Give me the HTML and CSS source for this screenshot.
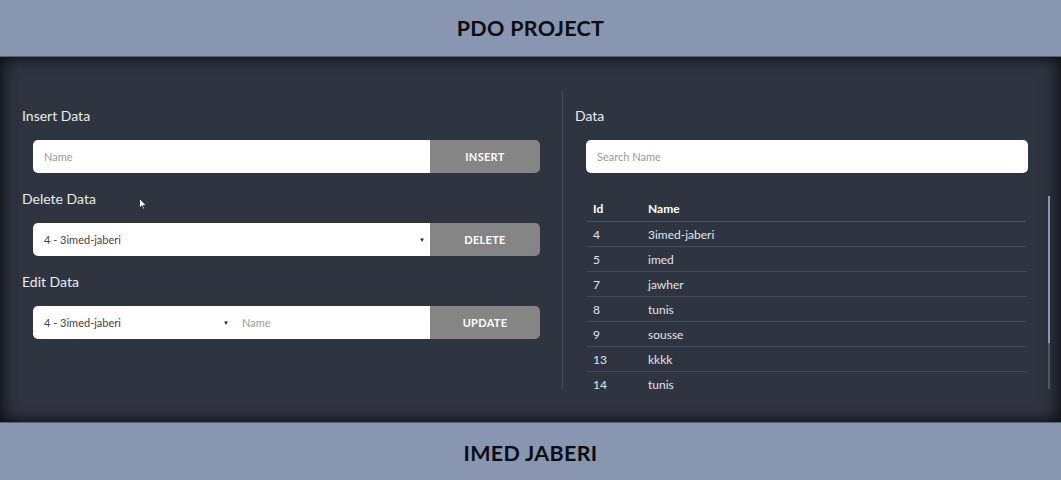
FILE: index.html
```html
<!DOCTYPE html>
<html lang="en">
<head>
<meta charset="utf-8">
<title>PDO PROJECT</title>
<link rel="stylesheet" href="styles.css">
</head>
<body>
<header class="bar bar-top">PDO PROJECT</header>
<main class="main">
  <section class="col col-left">
    <h2 class="title">Insert Data</h2>
    <div class="row">
      <input class="field" type="text" placeholder="Name">
      <button class="btn">INSERT</button>
    </div>
    <h2 class="title">Delete Data</h2>
    <div class="row">
      <div class="select select-wide"><span>4 - 3imed-jaberi</span><span class="caret">▼</span></div>
      <button class="btn">DELETE</button>
    </div>
    <h2 class="title">Edit Data</h2>
    <div class="row">
      <div class="select select-half"><span>4 - 3imed-jaberi</span><span class="caret">▼</span></div>
      <input class="field field-name" type="text" placeholder="Name">
      <button class="btn">UPDATE</button>
    </div>
  </section>
  <section class="col col-right">
    <h2 class="title">Data</h2>
    <input class="search" type="text" placeholder="Search Name">
    <div class="table-box">
      <div class="table-scroll">
        <table class="table">
          <thead>
            <tr><th class="c-id">Id</th><th>Name</th></tr>
          </thead>
          <tbody>
            <tr><td class="c-id">4</td><td>3imed-jaberi</td></tr>
            <tr><td class="c-id">5</td><td>imed</td></tr>
            <tr><td class="c-id">7</td><td>jawher</td></tr>
            <tr><td class="c-id">8</td><td>tunis</td></tr>
            <tr><td class="c-id">9</td><td>sousse</td></tr>
            <tr><td class="c-id">13</td><td>kkkk</td></tr>
            <tr class="last"><td class="c-id">14</td><td>tunis</td></tr>
          </tbody>
        </table>
      </div>
      <div class="thumb"></div>
    </div>
  </section>
</main>
<footer class="bar bar-bottom">IMED JABERI</footer>
<svg class="cursor" width="8" height="12" viewBox="0 0 8 12"><path d="M0.5 0.5 L0.5 10 L2.8 7.8 L4.4 11.3 L5.6 10.8 L4.1 7.4 L7.2 7.4 Z" fill="#fff" stroke="#222" stroke-width="0.8"/></svg>
</body>
</html>
```
FILE: styles.css
```css
* { box-sizing: border-box; }

html, body {
  margin: 0;
  padding: 0;
  width: 1061px;
  height: 480px;
  overflow: hidden;
  font-family: Lato, "Open Sans", "Liberation Sans", sans-serif;
}

body {
  position: relative;
  background: #8896b2;
}

.bar {
  display: flex;
  align-items: center;
  justify-content: center;
  background: #8896b2;
  color: #0d0d0f;
  font-weight: 700;
  font-size: 21.5px;
  letter-spacing: 0.3px;
}

.bar-top {
  height: 57px;
  border-bottom: 1px solid #59617a;
}

.bar-bottom {
  height: 58px;
  border-top: 1px solid #59617a;
  padding-top: 2px;
}

.main {
  height: 365px;
  background: #2f3441;
  box-shadow: inset 0 8px 12px -4px rgba(0, 0, 0, 0.45),
              inset 14px 0 16px -8px rgba(0, 0, 0, 0.45),
              inset -14px 0 16px -8px rgba(0, 0, 0, 0.45),
              inset 0 -8px 12px -4px rgba(0, 0, 0, 0.45);
  padding: 34px 11px 33px 22px;
  display: grid;
  grid-template-columns: 541px 1fr;
}

.col-left {
  border-right: 1px solid #4a505e;
  padding: 15px 22px 0 0;
}

.col-right {
  padding: 15px 0 0 12px;
  display: flex;
  flex-direction: column;
}

.title {
  margin: 0;
  height: 20px;
  line-height: 20px;
  font-size: 14px;
  font-weight: 400;
  color: #ebebeb;
}

.row {
  display: flex;
  height: 33px;
  margin: 14px 0 16px 11px;
  border-radius: 5px;
  overflow: hidden;
}

.field, .search {
  border: 0;
  outline: none;
  font-family: inherit;
  font-size: 11px;
  color: #555;
  background: #fff;
  padding: 0 11px;
}

.field::placeholder, .search::placeholder {
  color: #9a9a9a;
}

.field {
  flex: 1;
  height: 33px;
}

.field-name {
  padding-left: 2px;
}

.select {
  display: flex;
  align-items: center;
  justify-content: space-between;
  background: #fff;
  height: 33px;
  padding: 0 5px 0 11px;
  font-size: 11px;
  color: #444;
}

.select-wide { flex: 1; }

.select-half {
  width: 207px;
  padding-right: 11px;
}

.caret {
  font-size: 6px;
  color: #222;
}

.btn {
  width: 110px;
  height: 33px;
  border: 0;
  background: #858585;
  color: #fff;
  font-family: inherit;
  font-weight: 700;
  font-size: 11px;
  letter-spacing: 0.3px;
}

.search {
  height: 33px;
  margin: 14px 22px 0 11px;
  border-radius: 5px;
}

.table-box {
  position: relative;
  margin: 23px 0 0 11px;
  height: 193px;
  border-right: 2px solid #4d5567;
}

.table-scroll {
  height: 198px;
  overflow: hidden;
  padding: 0 22px 0 1px;
}

.thumb {
  position: absolute;
  top: 0;
  right: -2px;
  width: 2px;
  height: 147px;
  background: #8c97ad;
}

.table {
  width: 100%;
  border-collapse: collapse;
  font-size: 12px;
  color: #e2e4ea;
}

.table th {
  height: 25px;
  text-align: left;
  font-weight: 700;
  color: #fff;
  border-bottom: 1px solid #4d5363;
  padding: 0 6px;
}

.table td {
  height: 25px;
  padding: 1px 6px 0;
  border-bottom: 1px solid #464c5b;
}

.table tr.last td { border-bottom: 0; }

.c-id { width: 55px; }

.cursor {
  position: absolute;
  left: 139px;
  top: 198px;
}
```
